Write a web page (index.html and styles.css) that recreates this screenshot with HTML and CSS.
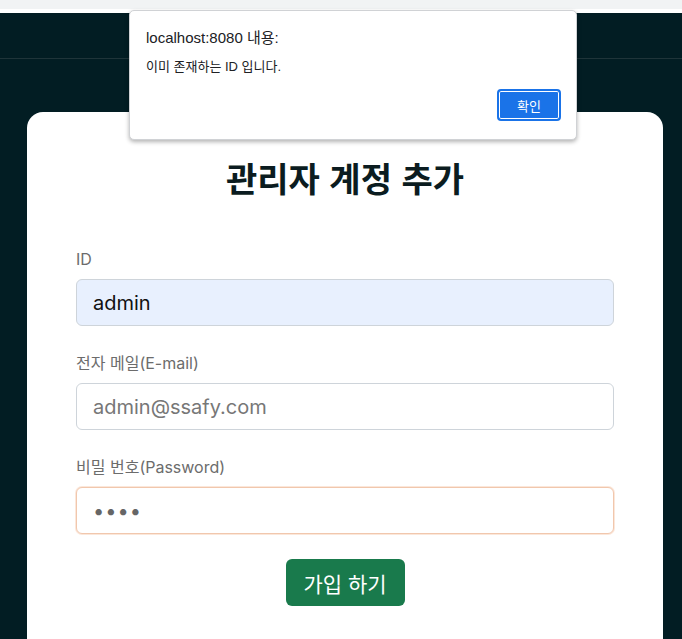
FILE: index.html
```html
<!DOCTYPE html>
<html lang="ko">
<head>
<meta charset="utf-8">
<title>관리자 계정 추가</title>
<link rel="stylesheet" href="styles.css">
</head>
<body>
<div class="browserbar"></div>
<div class="page">
  <header class="header"></header>
  <main class="main">
    <section class="card">
      <h2 class="title">관리자 계정 추가</h2>
      <form class="form">
        <div class="field">
          <label class="label">ID</label>
          <input class="input input-autofill" type="text" value="admin">
        </div>
        <div class="field">
          <label class="label">전자 메일(E-mail)</label>
          <input class="input input-muted" type="text" value="admin@ssafy.com">
        </div>
        <div class="field field-last">
          <label class="label">비밀 번호(Password)</label>
          <input class="input input-focus" type="password" value="1234">
        </div>
        <div class="actions">
          <button class="submit" type="button">가입 하기</button>
        </div>
      </form>
    </section>
  </main>
</div>
<div class="dialog">
  <div class="dialog-title">localhost:8080 내용:</div>
  <div class="dialog-msg">이미 존재하는 ID 입니다.</div>
  <div class="dialog-actions">
    <button class="dialog-btn" type="button">확인</button>
  </div>
</div>
</body>
</html>
```

FILE: styles.css
```css
html, body {
  margin: 0;
  padding: 0;
  height: 100%;
  overflow: hidden;
}
body {
  font-family: Inter, "Noto Sans CJK KR", sans-serif;
  background: #021d23;
}
.browserbar {
  height: 9px;
  background: #f1f3f4;
  border-bottom: 4px solid #ffffff;
}
.page {
  background: #021d23;
  height: 626px;
  overflow: hidden;
}
.header {
  height: 45px;
  border-bottom: 1px solid #1f3439;
}
.main {
  padding-top: 53px;
}
.card {
  margin-left: 27px;
  width: 538px;
  background: #fff;
  border-radius: 16px;
  padding: 43px 49px 0 49px;
  height: 500px;
}
.title {
  margin: 0;
  text-align: center;
  font-family: "Noto Sans CJK KR", sans-serif;
  font-weight: 700;
  font-size: 34px;
  line-height: 46px;
  color: #0b1c20;
}
.form {
  margin-top: 47px;
  display: flex;
  flex-direction: column;
}
.field {
  display: flex;
  flex-direction: column;
  margin-bottom: 26px;
}
.field-last {
  margin-bottom: 25px;
}
.label {
  font-family: Inter, "Noto Sans CJK KR", sans-serif;
  font-size: 16px;
  line-height: 22px;
  color: #6c6c6c;
  margin-bottom: 9px;
}
.input {
  box-sizing: border-box;
  height: 47px;
  width: 100%;
  border: 1px solid #ced4da;
  border-radius: 6px;
  padding: 0 16px;
  font-family: Inter, "Noto Sans CJK KR", sans-serif;
  font-size: 20px;
  color: #111;
  background: #fff;
  outline: none;
}
.input-autofill {
  background: #e8f0fe;
  color: #111;
}
.input-muted {
  color: #777;
}
.input-focus {
  border-color: #f1c7ad;
  box-shadow: 0 0 0 1px #fbe7da;
  color: #666;
  letter-spacing: 1px;
}
.actions {
  display: flex;
  justify-content: center;
}
.submit {
  height: 47px;
  width: 119px;
  padding: 0;
  border: none;
  border-radius: 6px;
  background: #197a4c;
  color: #fff;
  font-family: "Noto Sans CJK KR", sans-serif;
  font-size: 21px;
  margin-top: 0;
}
.dialog {
  position: absolute;
  left: 129px;
  top: 10px;
  width: 446px;
  height: 128px;
  background: #fff;
  border: 1px solid #d0d2d5;
  border-radius: 5px;
  box-shadow: 0 2px 4px rgba(0,0,0,0.3);
  font-family: "Noto Sans CJK KR", "Liberation Sans", sans-serif;
  color: #202124;
}
.dialog-title {
  margin: 17px 0 0 16px;
  font-family: "Liberation Sans", "Noto Sans CJK KR", sans-serif;
  font-size: 15px;
  line-height: 20px;
}
.dialog-msg {
  margin: 11px 0 0 16px;
  font-family: "Liberation Sans", "Noto Sans CJK KR", sans-serif;
  font-size: 13px;
  line-height: 16px;
}
.dialog-actions {
  display: flex;
  justify-content: flex-end;
  margin: 14px 15px 0 0;
}
.dialog-btn {
  box-sizing: border-box;
  width: 64px;
  height: 32px;
  border: 2px solid #1a73e8;
  box-shadow: inset 0 0 0 1px #fff;
  border-radius: 4px;
  background: #1a73e8;
  color: #fff;
  font-family: "Noto Sans CJK KR", sans-serif;
  font-size: 13px;
  padding: 0;
}
```
